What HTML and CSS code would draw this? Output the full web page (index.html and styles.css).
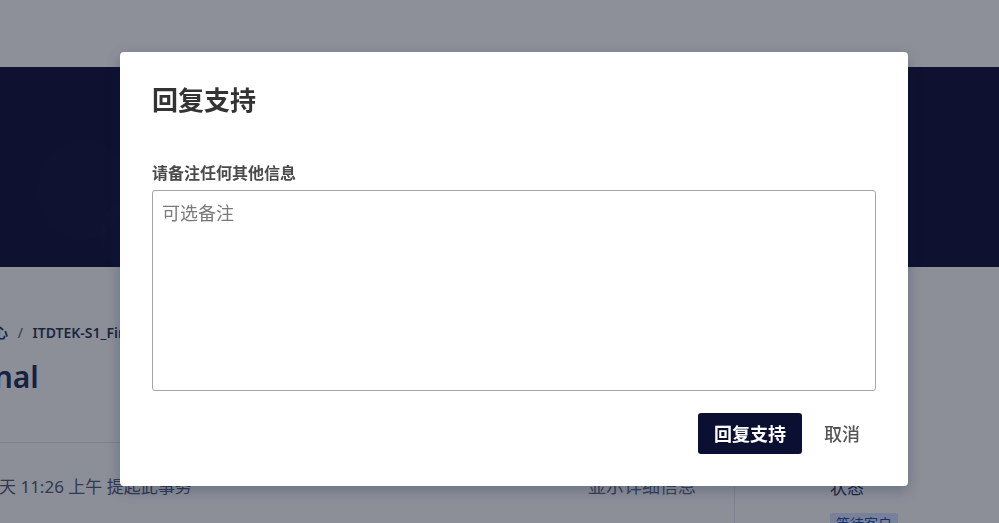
FILE: index.html
```html
<!DOCTYPE html>
<html lang="zh-CN">
<head>
<meta charset="utf-8">
<title>回复支持</title>
<link rel="stylesheet" href="styles.css">
</head>
<body>
<div class="page">
  <header class="topbar"></header>
  <section class="banner"></section>
  <main class="main">
    <div class="left-col">
      <div class="breadcrumb">帮助中心 <span class="sep">/</span> ITDTEK-S1_Final</div>
      <h1 class="issue-title">Final</h1>
      <div class="activity">
        <span class="activity-text">今天 11:26 上午 提起此事务</span>
        <span class="details-link">显示详细信息</span>
      </div>
    </div>
    <aside class="right-col">
      <div class="status-label">状态</div>
      <span class="badge">等待客户</span>
    </aside>
  </main>
</div>

<div class="overlay">
  <div class="modal" role="dialog" aria-labelledby="modal-title">
    <h2 class="modal-title" id="modal-title">回复支持</h2>
    <label class="field-label" for="note">请备注任何其他信息</label>
    <textarea class="note" id="note" placeholder="可选备注"></textarea>
    <div class="modal-footer">
      <button class="btn btn-primary" type="button">回复支持</button>
      <button class="btn btn-link" type="button">取消</button>
    </div>
  </div>
</div>
</body>
</html>
```

FILE: styles.css
```css
* { box-sizing: border-box; }

html, body {
  margin: 0;
  padding: 0;
  width: 999px;
  height: 523px;
  overflow: hidden;
  font-family: "Noto Sans", "Noto Sans CJK SC", sans-serif;
  background: #ffffff;
}

.page {
  width: 999px;
  height: 523px;
  overflow: hidden;
}

.topbar {
  height: 67px;
  background: #ffffff;
}

.banner {
  height: 200px;
  background: #00002e;
  position: relative;
  overflow: hidden;
}

.banner::before {
  content: "";
  position: absolute;
  left: 37px;
  top: 73px;
  width: 92px;
  height: 100px;
  border-radius: 50%;
  background: rgba(255, 255, 255, 0.012);
}

.banner::after {
  content: "";
  position: absolute;
  left: 100px;
  top: 128px;
  width: 80px;
  height: 80px;
  border-radius: 50%;
  background: rgba(255, 255, 255, 0.01);
}

.main {
  display: grid;
  grid-template-columns: 735px 1fr;
  height: 256px;
  background: #fbfbfc;
}

.left-col {
  border-right: 1px solid #dfe1e6;
  padding-top: 56px;
}

.breadcrumb {
  font-size: 14px;
  line-height: 20px;
  font-weight: 600;
  color: #172b4d;
  white-space: nowrap;
  text-indent: -48px;
}

.breadcrumb .sep {
  margin: 0 6px;
  color: #42526e;
  font-weight: 400;
}

.issue-title {
  margin: 16px 0 0;
  font-size: 30px;
  line-height: 36px;
  font-weight: 600;
  color: #0f2350;
  white-space: nowrap;
  text-indent: -31px;
  padding-bottom: 47px;
  border-bottom: 1px solid #dfe1e6;
}

.activity {
  display: flex;
  justify-content: space-between;
  align-items: baseline;
  padding: 33px 38px 0 0;
  font-size: 17px;
  line-height: 20px;
  color: #42526e;
  white-space: nowrap;
}

.activity-text {
  text-indent: -18px;
  display: block;
}

.details-link {
  color: #505f79;
  font-size: 18px;
}

.right-col {
  padding: 211px 0 0 95px;
}

.status-label {
  font-size: 17px;
  line-height: 20px;
  color: #172b4d;
}

.badge {
  display: inline-block;
  margin-top: 15px;
  padding: 1px 6px;
  font-size: 14px;
  line-height: 20px;
  border-radius: 3px;
  background: #d2e0ff;
  color: #0747a6;
}

.overlay {
  position: fixed;
  inset: 0;
  background: rgba(29, 33, 51, 0.5);
}

.modal {
  position: absolute;
  left: 120px;
  top: 52px;
  width: 788px;
  height: 434px;
  background: #ffffff;
  border-radius: 4px;
  padding: 24px 32px 32px;
  box-shadow: 0 4px 14px rgba(9, 30, 66, 0.25);
  display: flex;
  flex-direction: column;
}

.modal-title {
  margin: 0;
  font-size: 26px;
  line-height: 48px;
  font-weight: 700;
  color: #333333;
}

.field-label {
  display: block;
  margin-top: 40px;
  font-family: "Liberation Serif", "Noto Sans CJK SC", serif;
  font-size: 16px;
  line-height: 20px;
  font-weight: 700;
  color: #4a4a4a;
}

.note {
  margin-top: 6px;
  width: 724px;
  height: 201px;
  resize: none;
  border: 1px solid #a5a5a5;
  border-radius: 3px;
  padding: 9px 9px;
  font-family: "Noto Sans CJK SC", sans-serif;
  font-size: 18px;
  line-height: 24px;
  color: #333333;
  outline: none;
}

.note::placeholder {
  color: #7a7a7a;
}

.modal-footer {
  display: flex;
  justify-content: flex-end;
  gap: 6px;
  margin-top: 22px;
}

.btn {
  font-family: "Noto Sans CJK SC", sans-serif;
  font-size: 18px;
  line-height: 25px;
  padding: 8px 16px;
  border: none;
  border-radius: 3px;
  cursor: pointer;
}

.btn-primary {
  background: #0b1033;
  color: #ffffff;
  font-weight: 700;
}

.btn-link {
  background: transparent;
  color: #555555;
  font-weight: 500;
}
```
